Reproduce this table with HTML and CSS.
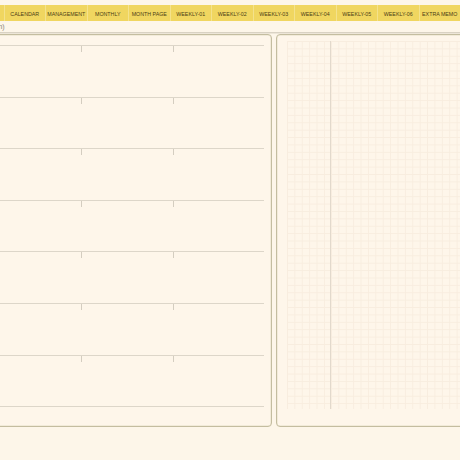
FILE: index.html
```html
<!DOCTYPE html>
<html>
<head>
<meta charset="utf-8">
<link rel="stylesheet" href="styles.css">
</head>
<body>
<div class="top-gap"></div>
<nav class="tabs">
  <span class="tab tab-stub"></span>
  <span class="tab">CALENDAR</span>
  <span class="tab">MANAGEMENT</span>
  <span class="tab">MONTHLY</span>
  <span class="tab">MONTH PAGE</span>
  <span class="tab">WEEKLY-01</span>
  <span class="tab">WEEKLY-02</span>
  <span class="tab">WEEKLY-03</span>
  <span class="tab">WEEKLY-04</span>
  <span class="tab">WEEKLY-05</span>
  <span class="tab">WEEKLY-06</span>
  <span class="tab">EXTRA MEMO</span>
</nav>
<div class="crumb"><span class="crumb-text">(Plan)</span></div>
<main class="spread">
  <section class="panel panel-left">
    <div class="rows">
      <div class="row"><i></i><i></i></div>
      <div class="row"><i></i><i></i></div>
      <div class="row"><i></i><i></i></div>
      <div class="row"><i></i><i></i></div>
      <div class="row"><i></i><i></i></div>
      <div class="row"><i></i><i></i></div>
      <div class="row"><i></i><i></i></div>
      <div class="row-end"></div>
    </div>
  </section>
  <section class="panel panel-right">
    <div class="grid-area">
      <div class="grid grid-margin"></div>
      <div class="grid grid-main"></div>
    </div>
  </section>
</main>
</body>
</html>
```
FILE: styles.css
```css
html, body {
  margin: 0;
  padding: 0;
  background: #fdf6e9;
  overflow: hidden;
  width: 460px;
  height: 460px;
  font-family: "Liberation Sans", Arial, sans-serif;
}
.top-gap { height: 5px; }
.tabs {
  display: flex;
  height: 16px;
  background: #f0d660;
  white-space: nowrap;
}
.tab {
  flex: 0 0 41.5px;
  box-sizing: border-box;
  border-left: 1px solid #f4e28c;
  display: flex;
  align-items: center;
  justify-content: center;
  padding-top: 1px;
  font-size: 5.3px;
  color: #4a3d14;
}
.tab-stub { flex: 0 0 3.5px; border-left: none; }
.crumb {
  height: 12px;
  box-sizing: border-box;
  border-bottom: 1px solid #d9d2c3;
  box-shadow: 0 1px 0 #ede6d8;
  font-size: 7px;
  color: #8a8478;
  line-height: 12px;
  overflow: hidden;
  white-space: nowrap;
}
.crumb-text { margin-left: -14px; }
.spread {
  display: flex;
  gap: 4px;
  margin-left: -22px;
  margin-top: 1px;
}
.panel {
  box-sizing: border-box;
  height: 393px;
  border: 1.5px solid #c4bda0;
  border-radius: 4px;
  background: #fef6ea;
  box-shadow: inset 0 0 0 0.5px #e6e0c8;
  flex: 0 0 auto;
}
.panel-left {
  width: 294px;
  padding: 10px 7.5px 0 0;
}
.rows {
  display: flex;
  flex-direction: column;
}
.row {
  height: 51.6px;
  box-sizing: border-box;
  border-top: 1px solid #ddd6c9;
  display: flex;
}
.row i {
  display: block;
  width: 1px;
  height: 6px;
  background: #d4cdc0;
}
.row i:first-child { margin-left: 102px; }
.row i:last-child { margin-left: 91px; }
.row-end { border-top: 1px solid #ddd6c9; }
.panel-right {
  width: 240px;
  padding: 6px 0 0 9.5px;
}
.grid-area {
  display: flex;
  height: 368px;
}
.grid {
  background-color: #fef6ea;
  background-image:
    linear-gradient(to right, #f8eddf 1px, transparent 1px),
    linear-gradient(to bottom, #f8eddf 1px, transparent 1px);
  background-size: 7.4px 7.4px;
}
.grid-margin {
  width: 43px;
  border-right: 1.5px solid #e2d9cc;
}
.grid-main { flex: 1; }
```
